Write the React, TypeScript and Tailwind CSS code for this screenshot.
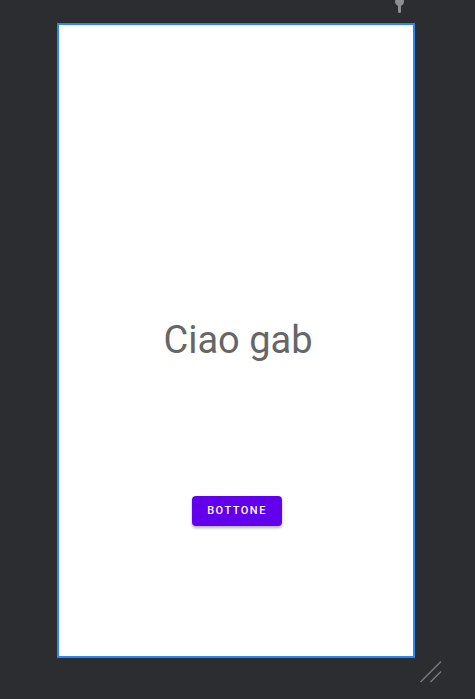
export default function App() {
  return (
    <div
      className="relative h-[699px] w-[475px] overflow-hidden bg-[#2b2d30]"
      style={{ fontFamily: "Roboto, 'Liberation Sans', sans-serif" }}
    >
      {/* pin marker on top edge */}
      <svg
        className="absolute left-[393px] top-0"
        width="13"
        height="15"
        viewBox="0 0 13 15"
      >
        <circle cx="6.5" cy="1.5" r="4.5" fill="#8e8e8e" />
        <rect x="5" y="3" width="3" height="10" rx="1.5" fill="#8e8e8e" />
      </svg>

      <div className="pl-[57px] pt-[23px]">
        <div className="flex h-[635px] w-[358px] flex-col items-center border-2 border-[#2a86f2] bg-white">
          <p className="ml-[4px] mt-[293px] text-[38px] leading-[45px] text-[#666666]">Ciao gab</p>
          <button className="ml-[2px] mt-[133px] flex h-[30px] w-[90px] items-center justify-center rounded-[4px] bg-[#6200ee] text-[11px] font-medium tracking-[1.5px] text-white shadow-[0_2px_3px_rgba(0,0,0,0.3)]">
            BOTTONE
          </button>
        </div>
      </div>

      {/* resize handle */}
      <svg
        className="absolute left-[418px] top-[659px]"
        width="26"
        height="26"
        viewBox="0 0 26 26"
      >
        <line x1="2.5" y1="23" x2="23" y2="2.5" stroke="#7a7a7a" strokeWidth="1.4" />
        <line x1="12.5" y1="23" x2="23" y2="12.5" stroke="#7a7a7a" strokeWidth="1.4" />
      </svg>
    </div>
  );
}
